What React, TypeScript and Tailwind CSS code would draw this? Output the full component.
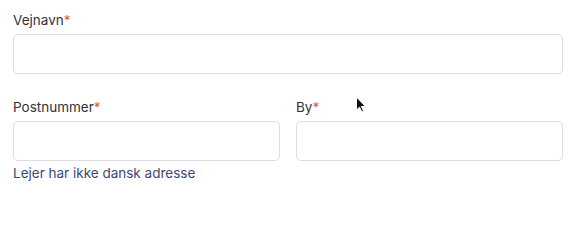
import React from "react";

function Label({ text, htmlFor }: { text: string; htmlFor: string }) {
  return (
    <label htmlFor={htmlFor} className="block text-[13.5px] leading-5 text-[#2f3338] mb-1">
      {text}
      <span className="text-[#e8553e]">*</span>
    </label>
  );
}

function Field({ id, label }: { id: string; label: string }) {
  return (
    <div className="flex flex-col">
      <Label text={label} htmlFor={id} />
      <input
        id={id}
        type="text"
        className="h-[40px] w-full rounded-[5px] border border-[#dcdee2] bg-white px-3 text-[14px] outline-none"
      />
    </div>
  );
}

export default function App() {
  return (
    <div
      className="relative w-[578px] h-[200px] bg-white px-[13px] pt-[10px]"
      style={{ fontFamily: "Inter, 'Liberation Sans', sans-serif" }}
    >
      <div className="w-[550px]">
        <Field id="vejnavn" label="Vejnavn" />
        <div className="mt-[23px] grid grid-cols-2 gap-4">
          <Field id="postnummer" label="Postnummer" />
          <Field id="by" label="By" />
        </div>
        <button type="button" className="mt-[2px] block text-[13.5px] leading-5 text-[#3b4a75]">
          Lejer har ikke dansk adresse
        </button>
      </div>

      {/* mouse pointer */}
      <svg
        className="absolute left-[355px] top-[96px]"
        width="12"
        height="18"
        viewBox="0 0 12 18"
      >
        <path
          d="M1.5 1 L1.5 14 L4.5 11.2 L6.8 16 L8.6 15.2 L6.4 10.5 L10.4 10.5 Z"
          fill="#111"
          stroke="#fff"
          strokeWidth="1"
          strokeLinejoin="round"
        />
      </svg>
    </div>
  );
}
